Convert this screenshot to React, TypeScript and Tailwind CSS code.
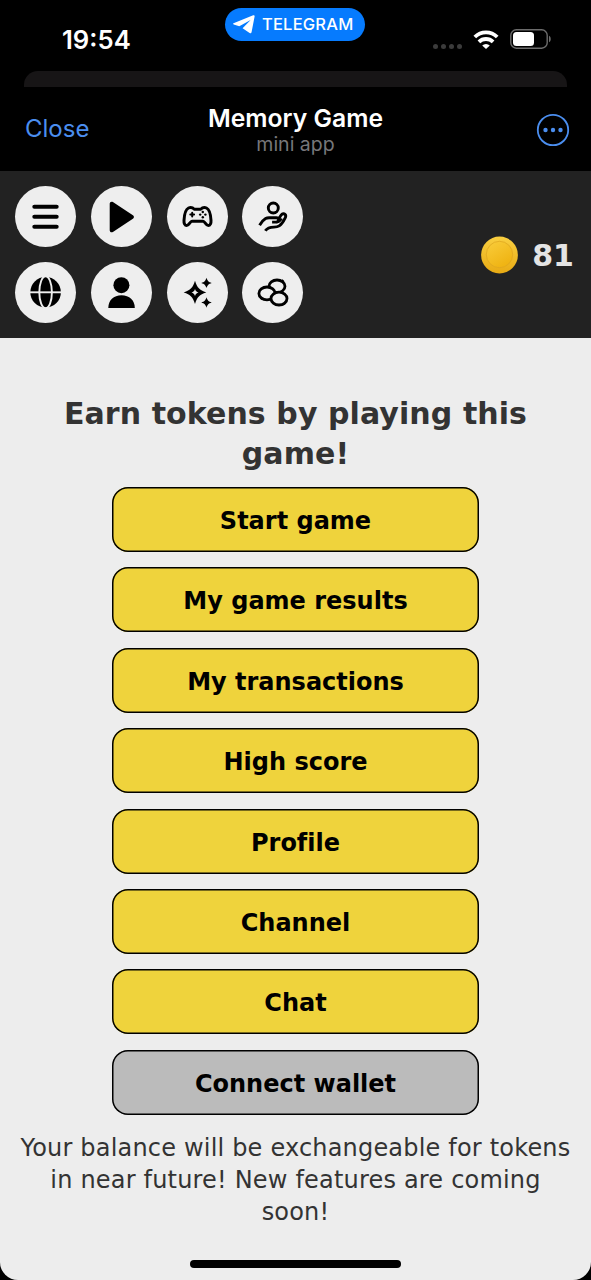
import type { ReactNode } from "react";

const menuItems = [
  "Start game",
  "My game results",
  "My transactions",
  "High score",
  "Profile",
  "Channel",
  "Chat",
];

export default function App() {
  return (
    <div className="h-[1280px] w-[591px] overflow-hidden bg-black font-['Inter',sans-serif]">
      <StatusBar />
      <div className="mx-auto mt-[6px] h-4 w-[543px] rounded-t-[14px] bg-[#171516]" />
      <MiniAppHeader />
      <div className="flex h-[1109px] flex-col overflow-hidden rounded-b-[18px] bg-[#ededed] font-['DejaVu_Sans',sans-serif]">
        <Toolbar />
        <main className="flex flex-1 flex-col items-center">
          <h1 className="mt-[56px] w-[520px] text-center text-[30px] leading-10 font-bold tracking-[0.08px] text-[#333333]">
            Earn tokens by playing this game!
          </h1>
          <div className="mt-[13px] flex flex-col gap-[15.4px]">
            {menuItems.map((label) => (
              <MenuButton key={label} label={label} />
            ))}
            <MenuButton label="Connect wallet" disabled />
          </div>
          <p className="mt-[17px] w-[556px] text-center text-[24px] leading-8 tracking-[0.19px] text-[#333333]">
            Your balance will be exchangeable for tokens in near future! New features are coming soon!
          </p>
          <div className="mt-auto mb-3 h-2 w-[211px] rounded-full bg-black" />
        </main>
      </div>
    </div>
  );
}

function StatusBar() {
  return (
    <div className="flex h-[65px] items-start pr-[39px] pl-[62px]">
      <span className="mt-6 w-[163px] shrink-0 text-[25.7px] leading-8 font-semibold text-white">19:54</span>
      <div className="mt-2 flex h-[33px] w-[140px] shrink-0 items-center rounded-full bg-[#067bfe] pl-2 text-white">
        <svg viewBox="0 0 22 19" className="h-[19px] w-[22px]" fill="currentColor">
          <path d="M.5 8.2 20.2.3c1-.4 1.600.1 1.400 1.100l-3 15.600c-.3 1.300-1 1.500-2 .9l-7-4.600 8-8.300L6.300 11.200.7 9.400C-.1 9.100-.1 8.500.5 8.200Z" />
        </svg>
        <span className="ml-[7px] text-[16.5px] font-medium tracking-[0.2px]">TELEGRAM</span>
      </div>
      <div className="mt-[29px] ml-auto flex h-5 items-center">
        <div className="mt-[14px] flex gap-[3px]">
          {[0, 1, 2, 3].map((dot) => (
            <span key={dot} className="size-[5px] rounded-full bg-[#3b3b3b]" />
          ))}
        </div>
        <svg viewBox="0 0 26 19" className="ml-[11px] h-[19px] w-[26px]" fill="none" stroke="white" strokeWidth="3.8">
          <path d="M1.800 7a16 16 0 0 1 22.400 0" />
          <path d="M5.900 11.900a10.200 10.200 0 0 1 14.200 0" />
          <path d="M13 19 9.200 15.500a5.500 5.500 0 0 1 7.600 0Z" fill="white" stroke="none" />
        </svg>
        <svg viewBox="0 0 42 20" className="ml-[11px] h-5 w-[42px]" fill="none">
          <rect x="0.8" y="0.8" width="36.4" height="18.4" rx="5.5" stroke="#6c6c6c" strokeWidth="1.4" />
          <rect x="3" y="3" width="21" height="14" rx="3.5" fill="white" />
          <path d="M39 6.800c2.300.8 2.300 5.600 0 6.400Z" fill="#6c6c6c" />
        </svg>
      </div>
    </div>
  );
}

function MiniAppHeader() {
  return (
    <header className="flex h-[84px] items-center justify-between pt-[2px] pr-[21px] pl-[25px]">
      <button className="w-[80px] pb-[2px] text-left text-[24px] text-[#4b8eef]">Close</button>
      <div className="text-center">
        <div className="text-[24.7px] leading-[28px] font-semibold text-white">Memory Game</div>
        <div className="text-[19.5px] leading-6 text-[#77777a]">mini app</div>
      </div>
      <button className="flex w-[84px] justify-end">
        <svg viewBox="0 0 34 34" className="size-[34px]" fill="none">
          <circle cx="17" cy="17" r="15.2" stroke="#4b8eef" strokeWidth="1.8" />
          <circle cx="9.5" cy="17" r="2.2" fill="#4b8eef" />
          <circle cx="17" cy="17" r="2.2" fill="#4b8eef" />
          <circle cx="24.5" cy="17" r="2.2" fill="#4b8eef" />
        </svg>
      </button>
    </header>
  );
}

function Toolbar() {
  return (
    <div className="flex h-[167px] shrink-0 items-center justify-between bg-[#222222] pr-[17px] pl-[15px]">
      <div className="grid grid-cols-4 gap-[14.8px]">
        <RoundButton label="Menu">
          <path d="M19.300 20.800h22.400M19.300 30.800h22.400M19.300 40.800h22.400" stroke="black" strokeWidth="4" strokeLinecap="round" />
        </RoundButton>
        <RoundButton label="Play">
          <path d="M18.700 17.800c0-1.700 1.700-2.600 3.200-1.700l20 13.200c1.400 1 1.400 2.500 0 3.400l-20 13.200c-1.500 1-3.200.1-3.200-1.700Z" fill="black" />
        </RoundButton>
        <RoundButton label="Games">
          <g stroke="black" strokeWidth="3" strokeLinejoin="round" strokeLinecap="round">
            <path d="M21.500 22c2.600-1.200 4.300-.3 5.800 1.300h6.400c1.500-1.600 3.200-2.500 5.800-1.300 3.200 1.500 4.200 7 4.500 12.300.2 3.200-.9 5.200-2.700 5.200-2.600 0-3.300-4.200-5.300-4.200H25c-2 0-2.700 4.200-5.300 4.200-1.800 0-2.900-2-2.700-5.200.3-5.300 1.300-10.800 4.500-12.300Z" />
            <path d="M25.200 26.700v3.800M23.300 28.600h3.800" strokeWidth="2" />
          </g>
          <g fill="black">
            <circle cx="35.8" cy="26" r="1.2" />
            <circle cx="33.2" cy="28.6" r="1.2" />
            <circle cx="38.4" cy="28.6" r="1.2" />
            <circle cx="35.8" cy="31.2" r="1.2" />
          </g>
        </RoundButton>
        <RoundButton label="Earn">
          <g stroke="black" strokeWidth="2.9" strokeLinejoin="round">
            <circle cx="31.3" cy="22" r="5" />
            <path d="M17.600 39.300c1.900-3.200 3.700-5.400 6-6.700 1.100-.6 2.200-.8 3.500-.8h7.200c1.500 0 2.300.8 2.300 2s-.8 2.300-2.300 2.300h-4.200" />
            <path d="M36.300 33.500c1.200-1.700 1.700-3 3-4.600 1.200-1.400 2.700-1.500 3.700-.6 1 .9.900 2.300.1 3.800-1.500 3-3.300 6-5.900 7.800-1.600 1.100-3.200 1.200-5.200 1.200-3 0-6.300.2-8.700 3.700" />
            <path d="M34.300 36.100c2.600 0 4-1 5.400-3.600" strokeWidth="2.5" />
          </g>
        </RoundButton>
        <RoundButton label="Language">
          <circle cx="30.6" cy="30.3" r="15.3" fill="black" />
          <g stroke="#eeeeee" strokeWidth="1.9">
            <ellipse cx="30.6" cy="30.3" rx="6.3" ry="16" />
            <path d="M15 30.300h31" />
          </g>
        </RoundButton>
        <RoundButton label="Profile">
          <circle cx="30.4" cy="23.2" r="8" fill="black" />
          <path d="M17.300 46c0-7.700 5.300-12.700 13.200-12.700S43.800 38.300 43.800 46Z" fill="black" />
        </RoundButton>
        <RoundButton label="Rewards">
          <path d="M28 18.800c2.300 7 4.300 9.300 11.300 11.600-7 2.300-9 4.300-11.300 11.600-2.300-7.300-4.300-9.300-11.300-11.600 7-2.300 9-4.600 11.300-11.600Z" fill="black" />
          <path d="M28 26.900c.8 2.200 1.500 2.800 3.500 3.500-2 .7-2.700 1.300-3.500 3.500-.8-2.200-1.500-2.800-3.500-3.500 2-.7 2.700-1.300 3.500-3.500Z" fill="#eeeeee" />
          <path d="M39.500 15.700c1.100 3.300 1.900 4.100 5.200 5.200-3.300 1.100-4.100 1.900-5.200 5.200-1.100-3.300-1.900-4.100-5.200-5.200 3.300-1.100 4.100-1.900 5.200-5.200ZM39.500 35.300c1.100 3.300 1.900 4.100 5.200 5.200-3.300 1.100-4.100 1.900-5.200 5.200-1.100-3.300-1.900-4.100-5.200-5.200 3.300-1.100 4.100-1.900 5.200-5.200Z" fill="black" />
        </RoundButton>
        <RoundButton label="Tokens">
          <g stroke="black" strokeWidth="2.8" fill="#eeeeee">
            <path d="m39.500 20 2-1.800" />
            <ellipse cx="35" cy="24.3" rx="8" ry="6.3" />
            <path d="m20 36-1 1.600" />
            <ellipse cx="25" cy="31.4" rx="8.1" ry="6.4" />
            <path d="m41.500 41 1.300 1.500" />
            <ellipse cx="37" cy="36.6" rx="8" ry="6.4" />
          </g>
        </RoundButton>
      </div>
      <div className="flex items-center">
        <svg viewBox="0 0 38 38" className="size-[38px]">
          <defs>
            <linearGradient id="coin" x1="0" y1="0" x2="0" y2="1">
              <stop offset="0" stopColor="#f9cf40" />
              <stop offset="1" stopColor="#e8ab14" />
            </linearGradient>
            <linearGradient id="coinFace" x1="0" y1="0" x2="0.6" y2="1">
              <stop offset="0" stopColor="#f9cd3c" />
              <stop offset="1" stopColor="#efb312" />
            </linearGradient>
          </defs>
          <circle cx="18.5" cy="19" r="18.4" fill="url(#coin)" />
          <circle cx="18.5" cy="18.5" r="13.2" fill="url(#coinFace)" stroke="#dda51f" strokeWidth="0.7" />
        </svg>
        <span className="mt-[3px] ml-[13px] text-[30px] leading-9 font-bold text-[#e4e4e4]">81</span>
      </div>
    </div>
  );
}

function RoundButton({ label, children }: { label: string; children: ReactNode }) {
  return (
    <button aria-label={label} className="size-[61px] rounded-full bg-[#eeeeee]">
      <svg viewBox="0 0 61 61" className="size-full" fill="none">
        {children}
      </svg>
    </button>
  );
}

function MenuButton({ label, disabled = false }: { label: string; disabled?: boolean }) {
  return (
    <button
      className={`h-[65px] w-[367px] rounded-[16px] pt-[3px] text-[24px] font-bold text-black shadow-[inset_0_0_0_1.5px_#000] [font-variant-ligatures:none] ${
        disabled ? "bg-[#bbbbbb]" : "bg-[#efd33c]"
      }`}
    >
      {label}
    </button>
  );
}
